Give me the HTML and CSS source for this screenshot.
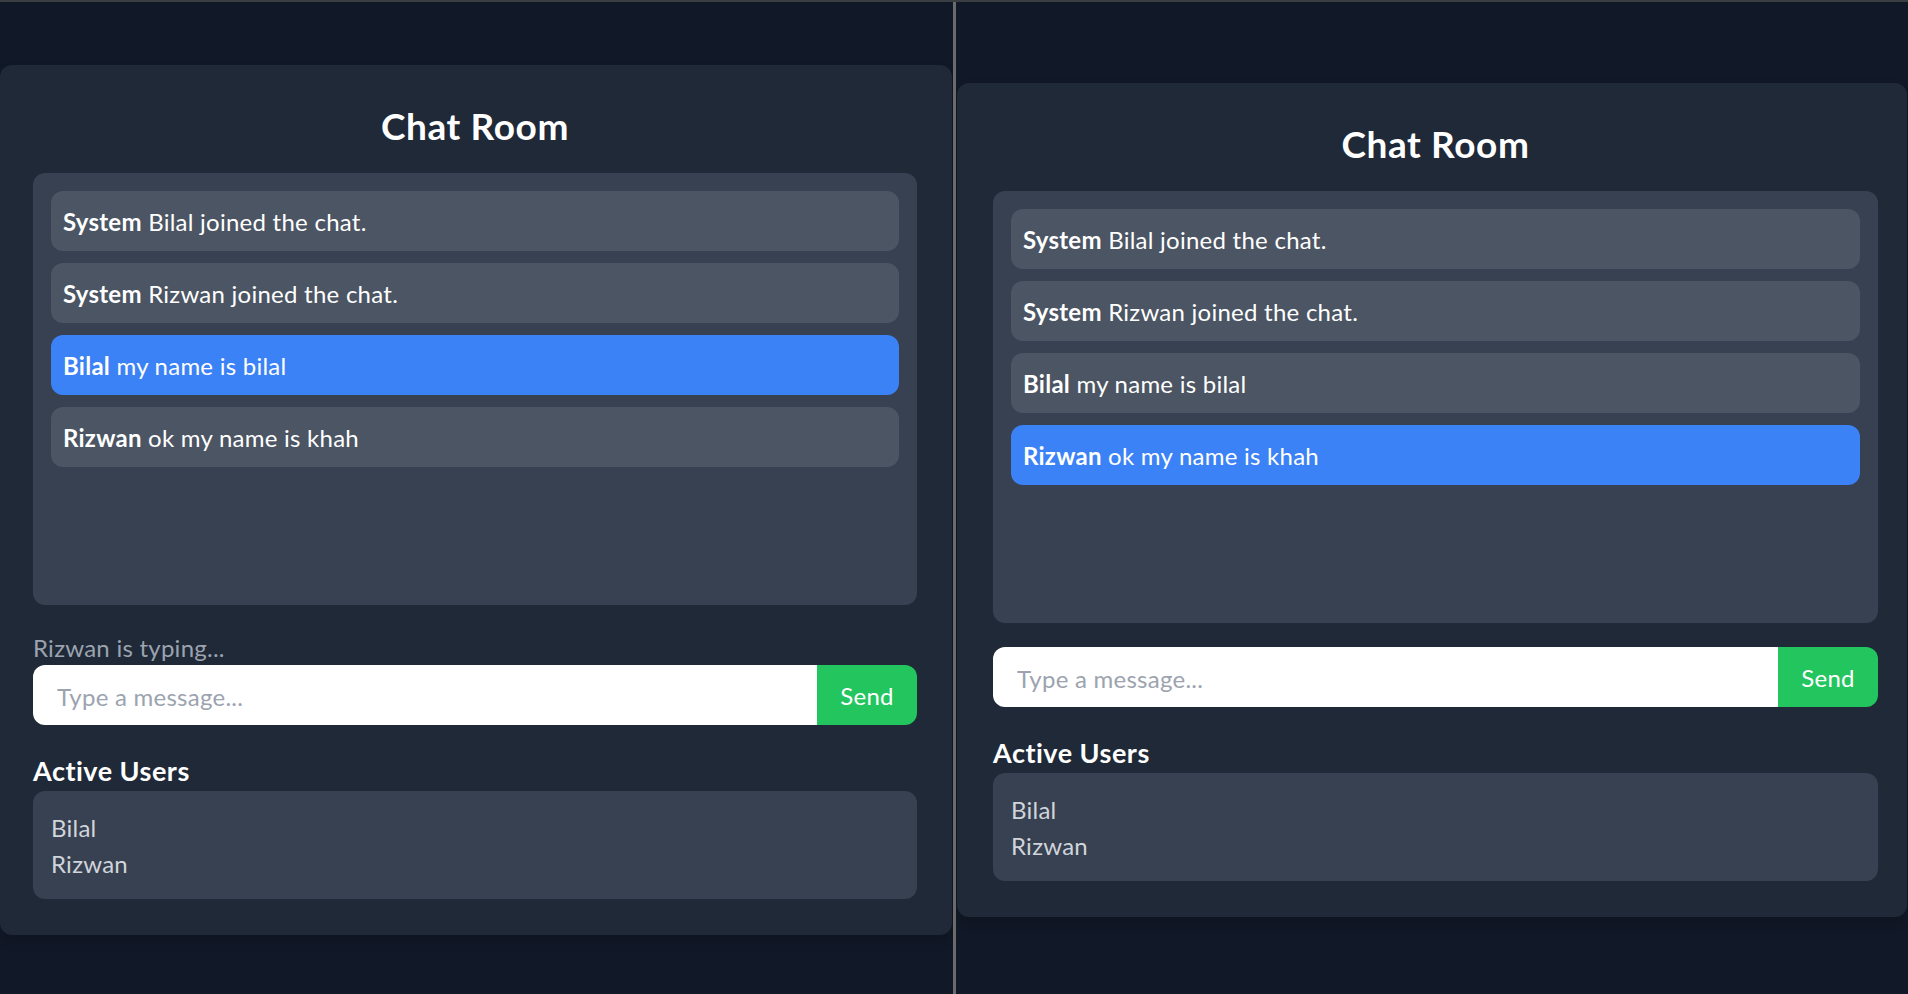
FILE: index.html
```html
<!DOCTYPE html>
<html lang="en">
<head>
<meta charset="utf-8">
<title>Chat Room</title>
<link rel="stylesheet" href="styles.css">
</head>
<body>
<div class="screen">
  <div class="pane pane-left">
    <div class="card">
      <h1 class="title">Chat Room</h1>
      <div class="messages">
        <div class="msg"><strong>System</strong> Bilal joined the chat.</div>
        <div class="msg"><strong>System</strong> Rizwan joined the chat.</div>
        <div class="msg msg-own"><strong>Bilal</strong> my name is bilal</div>
        <div class="msg"><strong>Rizwan</strong> ok my name is khah</div>
      </div>
      <div class="typing">Rizwan is typing...</div>
      <div class="composer">
        <input class="composer-input" type="text" placeholder="Type a message...">
        <button class="composer-send" type="button">Send</button>
      </div>
      <h2 class="users-title">Active Users</h2>
      <ul class="users">
        <li>Bilal</li>
        <li>Rizwan</li>
      </ul>
    </div>
  </div>
  <div class="divider"></div>
  <div class="pane pane-right">
    <div class="card">
      <h1 class="title">Chat Room</h1>
      <div class="messages">
        <div class="msg"><strong>System</strong> Bilal joined the chat.</div>
        <div class="msg"><strong>System</strong> Rizwan joined the chat.</div>
        <div class="msg"><strong>Bilal</strong> my name is bilal</div>
        <div class="msg msg-own"><strong>Rizwan</strong> ok my name is khah</div>
      </div>
      <div class="composer">
        <input class="composer-input" type="text" placeholder="Type a message...">
        <button class="composer-send" type="button">Send</button>
      </div>
      <h2 class="users-title">Active Users</h2>
      <ul class="users">
        <li>Bilal</li>
        <li>Rizwan</li>
      </ul>
    </div>
  </div>
</div>
</body>
</html>
```
FILE: styles.css
```css
* { box-sizing: border-box; }

html, body {
  margin: 0;
  padding: 0;
  height: 100%;
  background: #111827;
}

body {
  font-family: Lato, "Noto Sans", "Liberation Sans", sans-serif;
  font-size: 24px;
  line-height: 36px;
  letter-spacing: 0.25px;
  color: #ffffff;
  overflow: hidden;
}

.screen {
  display: flex;
  height: 994px;
  border-top: 2px solid #3a3d42;
}

.pane {
  display: flex;
  align-items: center;
  padding-top: 4px;
  background: #111827;
  overflow: hidden;
}

.pane-left { width: 953px; }
.pane-right { flex: 1; }

.divider {
  width: 3px;
  background: #6b6b6b;
}

.card {
  background: #1f2937;
  border-radius: 12px;
  padding: 36px;
  box-shadow: 0 6px 12px rgba(0, 0, 0, 0.15);
}

.pane-left .card {
  width: 952px;
  padding-left: 33px;
  padding-right: 35px;
}

.pane-right .card {
  width: 950px;
  margin-left: 1px;
  padding-left: 36px;
  padding-right: 29px;
}

.title {
  margin: 0 0 24px;
  padding-top: 1px;
  height: 48px;
  font-size: 37px;
  line-height: 48px;
  letter-spacing: 0.6px;
  font-weight: 700;
  text-align: center;
  color: #ffffff;
}

.messages {
  height: 432px;
  padding: 18px;
  background: #374151;
  border-radius: 12px;
  overflow-y: auto;
  margin-bottom: 24px;
}

.msg {
  padding: 13px 12px 11px;
  margin-bottom: 12px;
  background: #4b5563;
  border-radius: 12px;
  color: #ffffff;
}

.msg strong { font-weight: 700; }

.msg-own { background: #3b82f6; }

.typing {
  padding-top: 1px;
  height: 36px;
  color: #9ca3af;
}

.composer {
  display: flex;
}

.composer-input {
  flex: 1;
  min-width: 0;
  height: 60px;
  padding: 13px 24px 11px;
  border: none;
  border-radius: 12px 0 0 12px;
  background: #ffffff;
  font: inherit;
  letter-spacing: inherit;
  color: #111827;
  outline: none;
}

.composer-input::placeholder { color: #9ca3af; }

.composer-send {
  width: 100px;
  height: 60px;
  padding: 1px 0 0;
  border: none;
  border-radius: 0 12px 12px 0;
  background: #22c55e;
  color: #ffffff;
  font: inherit;
  letter-spacing: inherit;
}

.users-title {
  margin: 24px 0 0;
  padding-top: 1px;
  height: 42px;
  font-size: 27px;
  line-height: 42px;
  letter-spacing: 0.5px;
  font-weight: 700;
  color: #ffffff;
}

.users {
  list-style: none;
  margin: 0;
  padding: 19px 18px 17px;
  background: #374151;
  border-radius: 12px;
  color: #d1d5db;
}
```
